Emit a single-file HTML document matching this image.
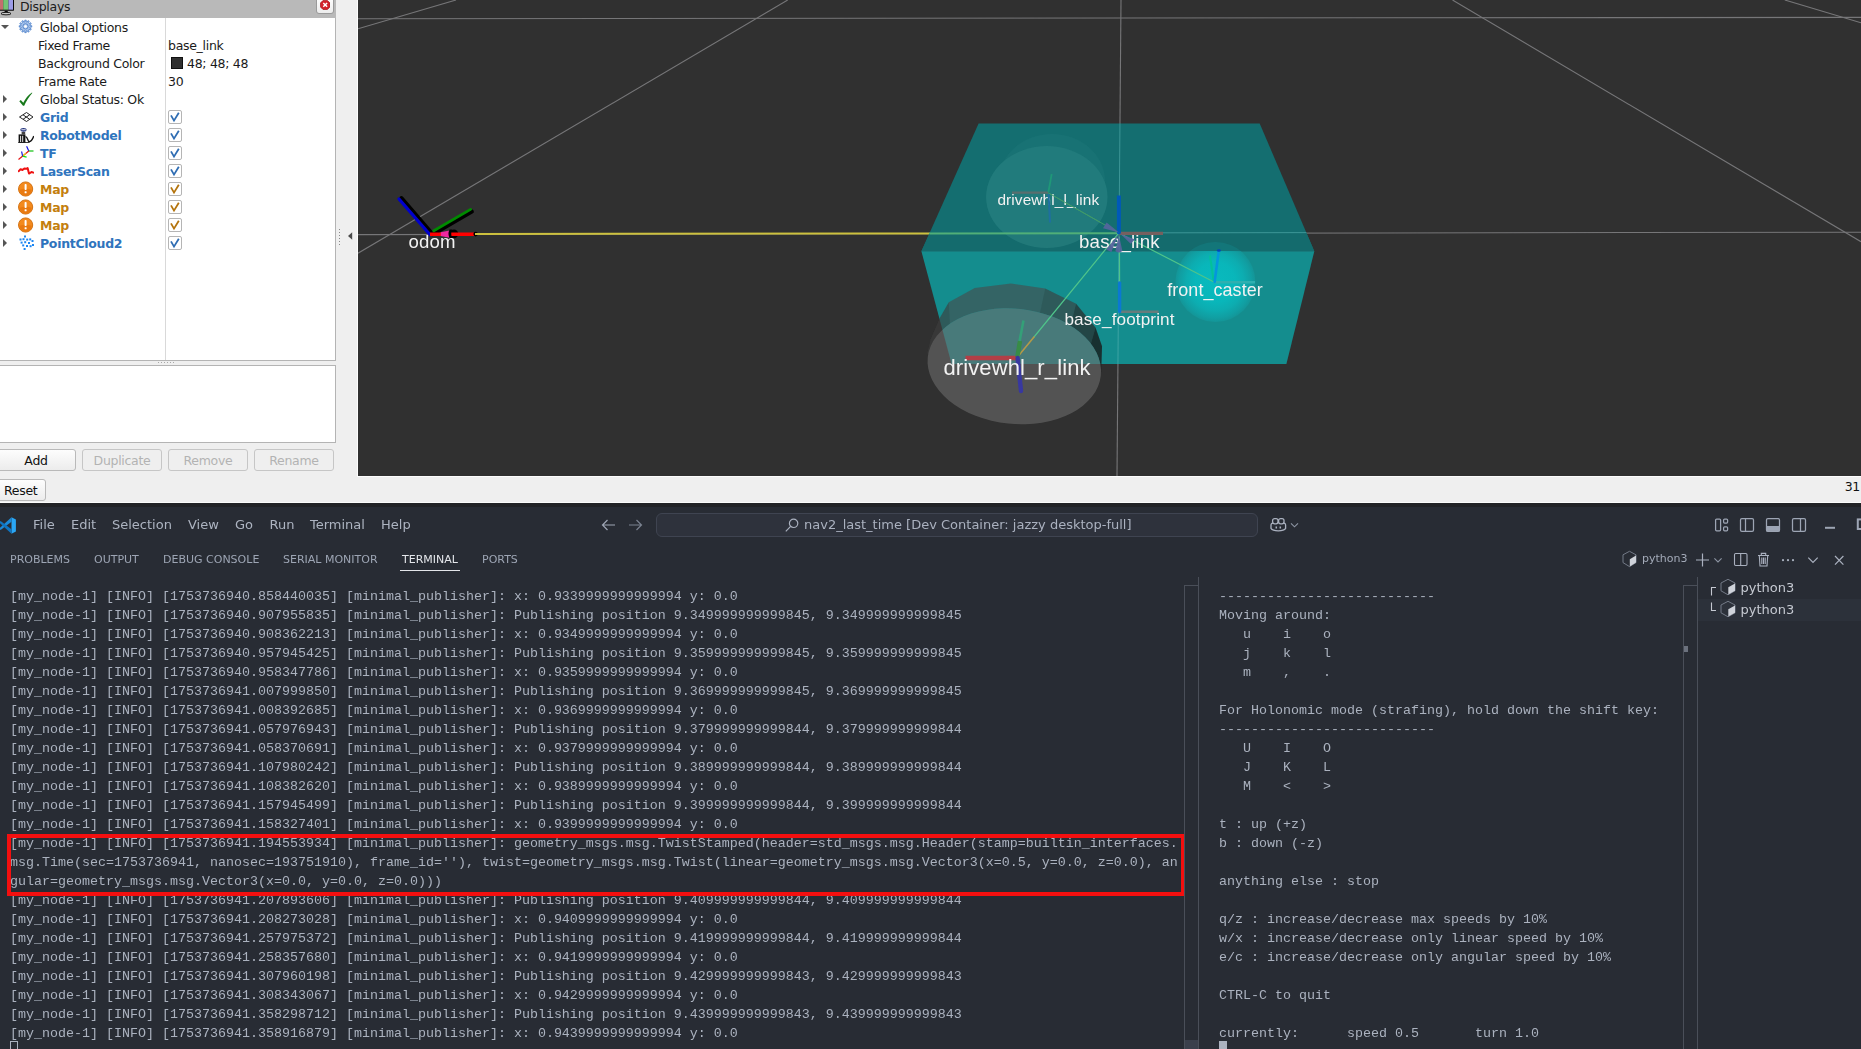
<!DOCTYPE html>
<html lang="en">
<head>
<meta charset="utf-8">
<title>RViz and VS Code terminal</title>
<style>
*{box-sizing:border-box;margin:0;padding:0}
html,body{width:1861px;height:1049px;overflow:hidden;background:#efefef}
body{position:relative;font-family:"DejaVu Sans","Liberation Sans",sans-serif;font-size:12px;color:#1a1a1a}
#rviz{font-size:12.5px;letter-spacing:-.3px}
.abs{position:absolute}
/* ---------- RViz ---------- */
#rviz{position:absolute;left:0;top:0;width:1861px;height:502px;background:#efefef}
#dtitle{position:absolute;left:0;top:0;width:336px;height:18px;background:#b9b9b9}
#dtitle .t{position:absolute;left:20px;top:-2px;font-size:12.5px;line-height:18px;color:#1b1b1b}
#dlist{position:absolute;left:0;top:18px;width:336px;height:343px;background:#fff;border-right:1px solid #b4b4b4;border-bottom:1px solid #b4b4b4}
#dlist .col{position:absolute;left:165px;top:0;width:1px;height:342px;background:#d9d9d9}
.row{position:absolute;left:0;width:335px;height:18px;line-height:19.6px;white-space:nowrap}
.row .lbl{position:absolute;top:0}
.row .val{position:absolute;left:168px;top:0}
.b{font-weight:700}
.blue{color:#2f74bd}
.org{color:#c47f0e}
.tri{position:absolute;left:3px;top:5px;width:0;height:0;border-left:4px solid #555;border-top:4px solid transparent;border-bottom:4px solid transparent}
.trid{position:absolute;left:1px;top:7px;width:0;height:0;border-top:4px solid #555;border-left:4px solid transparent;border-right:4px solid transparent}
.cb{position:absolute;left:168px;top:2px;width:14px;height:14px;border:1px solid #b5b5b5;border-radius:2px;background:#fff}
.cb svg{position:absolute;left:0;top:0}
#dbox2{position:absolute;left:0;top:365px;width:336px;height:78px;background:#fff;border:1px solid #b4b4b4;border-left:none}
.btn{position:absolute;height:22px;border:1px solid #b9b9b9;border-radius:3px;background:linear-gradient(#fdfdfd,#ececec);text-align:center;line-height:21px;font-size:12.5px;color:#111}
.btn.dis{color:#b3b3b3;background:#efefef;border-color:#c6c6c6}
#view3d{will-change:transform;position:absolute;left:358px;top:0;width:1503px;height:476px;background:#303030;overflow:hidden}
/* ---------- VS Code ---------- */
#sep1{position:absolute;left:0;top:502px;width:1861px;height:1px;background:#fbfbfb}
#sep2{position:absolute;left:0;top:503px;width:1861px;height:4px;background:#222326}
#vsc{will-change:transform;position:absolute;left:0;top:507px;width:1861px;height:542px;background:#282c34;color:#9da5b4;font-size:13px;overflow:hidden}
.menu{position:absolute;top:9px;line-height:17px;font-size:13px;color:#adb4c1;white-space:nowrap}
.tab{position:absolute;top:46px;line-height:14px;font-size:11px;color:#9da5b4;white-space:nowrap}
.term{position:absolute;font-family:"Liberation Mono","DejaVu Sans Mono",monospace;font-size:13.333px;line-height:19px;color:#abb2bf;white-space:pre}
</style>
</head>
<body>
<div id="rviz">
 <div id="dtitle">
  <svg class="abs" style="left:0;top:0" width="16" height="16" viewBox="0 0 16 16">
   <rect x="-3" y="-3" width="17" height="13.7" rx=".6" fill="#0a0a0a"/>
   <rect x="-2" y="-2" width="5.2" height="11.7" fill="#c46e6e"/><rect x="3.2" y="-2" width="5.3" height="11.7" fill="#74c474"/><rect x="8.5" y="-2" width="4.5" height="11.7" fill="#9c9ce8"/>
   <path d="M4.9 10.7 h2.6 l.6 1.7 h-3.8z" fill="#0a0a0a"/><ellipse cx="6" cy="13.6" rx="5" ry="1.25" fill="#c8c8c8" stroke="#0a0a0a" stroke-width=".9"/>
  </svg>
  <div class="t">Displays</div>
  <div class="abs" style="left:316px;top:-4px;width:18px;height:18px;border:1px solid #9a9a9a;border-radius:3px;background:linear-gradient(#fff,#ececec)"></div>
  <svg class="abs" style="left:320px;top:0px" width="10.4" height="10.4" viewBox="0 0 12 12">
   <polygon points="3.5,0.5 8.5,0.5 11.5,3.5 11.5,8 8.5,11 3.5,11 .5,8 .5,3.5" fill="#d3222a" stroke="#a40d14" stroke-width=".8"/>
   <path d="M3.8 3.4 L8.2 7.8 M8.2 3.4 L3.8 7.8" stroke="#fff" stroke-width="1.7"/>
  </svg>
 </div>
 <div id="dlist">
  <div class="col"></div>
  <!-- row 0 -->
  <div class="row" style="top:0"><i class="trid"></i>
   <svg class="abs" style="left:18px;top:1px" width="16" height="16" viewBox="0 0 16 16"><path d="M6.83 2.85 L6.78 1.14 L8.22 1.14 L8.17 2.85 L9.19 3.12 L10.00 1.62 L11.26 2.34 L10.36 3.80 L11.10 4.54 L12.56 3.64 L13.28 4.90 L11.78 5.71 L12.05 6.73 L13.76 6.68 L13.76 8.12 L12.05 8.07 L11.78 9.09 L13.28 9.90 L12.56 11.16 L11.10 10.26 L10.36 11.00 L11.26 12.46 L10.00 13.18 L9.19 11.68 L8.17 11.95 L8.22 13.66 L6.78 13.66 L6.83 11.95 L5.81 11.68 L5.00 13.18 L3.74 12.46 L4.64 11.00 L3.90 10.26 L2.44 11.16 L1.72 9.90 L3.22 9.09 L2.95 8.07 L1.24 8.12 L1.24 6.68 L2.95 6.73 L3.22 5.71 L1.72 4.90 L2.44 3.64 L3.90 4.54 L4.64 3.80 L3.74 2.34 L5.00 1.62 L5.81 3.12Z" fill="#a9c4ea" stroke="#3a72c4" stroke-width=".7" stroke-linejoin="round"/><circle cx="7.5" cy="7.4" r="2.6" fill="#c4d7f1" stroke="#3a72c4" stroke-width=".8"/><circle cx="7.5" cy="7.4" r="1.2" fill="#fff"/></svg>
   <span class="lbl" style="left:40px">Global Options</span></div>
  <div class="row" style="top:18px"><span class="lbl" style="left:38px">Fixed Frame</span><span class="val">base_link</span></div>
  <div class="row" style="top:36px"><span class="lbl" style="left:38px">Background Color</span><i class="abs" style="left:171px;top:3px;width:12px;height:12px;background:#303030;border:1px solid #111"></i><span class="val" style="left:187px">48; 48; 48</span></div>
  <div class="row" style="top:54px"><span class="lbl" style="left:38px">Frame Rate</span><span class="val">30</span></div>
  <div class="row" style="top:72px"><i class="tri"></i>
   <svg class="abs" style="left:18px;top:1px" width="16" height="16" viewBox="0 0 16 16"><path d="M1.3 10.2 L2.8 9 L5.3 11.8 C7 8 10.5 3.6 14 1.4 L14.3 1.9 C11 5.5 8 10.5 6.2 14.8 L5 14.8 Z" fill="#17791b"/></svg>
   <span class="lbl" style="left:40px">Global Status: Ok</span></div>
  <div class="row" style="top:90px"><i class="tri"></i>
   <svg class="abs" style="left:18px;top:1px" width="16" height="16" viewBox="0 0 16 16"><g fill="none" stroke="#222" stroke-width="1"><path d="M1.5 8 L8.5 3.5 L15 8 L8.5 12.5 Z"/><path d="M5 5.8 L11.7 10.3 M11.7 5.8 L5 10.3"/></g></svg>
   <span class="lbl b blue" style="left:40px">Grid</span><span class="cb"><svg width="12" height="12" viewBox="0 0 12 12"><path d="M2 4.4 L5 9.6 L9.8 1.8" fill="none" stroke="#2f6db3" stroke-width="1.8"/></svg></span></div>
  <div class="row" style="top:108px"><i class="tri"></i>
   <svg class="abs" style="left:18px;top:1px" width="16" height="16" viewBox="0 0 16 16"><ellipse cx="5.5" cy="2.8" rx="3.1" ry="1.9" fill="#1f2f78"/><rect x="3.2" y="2.3" width="4.6" height="1" rx=".5" fill="#e8ecf8"/><path d="M3.6 5 h3.6 v2.4 h-3.6z" fill="#444"/><path d="M.6 7.4 h6.8 v8.2 h-6.8z" fill="#111"/><path d="M2.6 8.8v6.4M4.7 8.8v6.4" stroke="#fff" stroke-width=".9"/><path d="M7.4 9.6 C10 9.6 9.2 14.6 11.4 14.6 C13.8 14.6 14.4 11.8 15.8 9.2" stroke="#111" stroke-width="1.4" fill="none"/><path d="M.2 15.6h11.4" stroke="#111" stroke-width=".9"/></svg>
   <span class="lbl b blue" style="left:40px">RobotModel</span><span class="cb"><svg width="12" height="12" viewBox="0 0 12 12"><path d="M2 4.4 L5 9.6 L9.8 1.8" fill="none" stroke="#2f6db3" stroke-width="1.8"/></svg></span></div>
  <div class="row" style="top:126px"><i class="tri"></i>
   <svg class="abs" style="left:18px;top:1px" width="16" height="16" viewBox="0 0 16 16"><g fill="none" stroke-width="1.2"><path d="M8.6 1.2 L10.8 6" stroke="#1414e6"/><path d="M10.8 6 H15.5" stroke="#10c010"/><path d="M10.8 6 L.5 14.5" stroke="#e41313"/><path d="M3.6 6.5 L4.6 11.2" stroke="#1414e6"/><path d="M4.6 11.2 L8.6 12.2" stroke="#10e010"/><path d="M8 8.3 L5.2 10.6" stroke="#e8d80e"/></g></svg>
   <span class="lbl b blue" style="left:40px">TF</span><span class="cb"><svg width="12" height="12" viewBox="0 0 12 12"><path d="M2 4.4 L5 9.6 L9.8 1.8" fill="none" stroke="#2f6db3" stroke-width="1.8"/></svg></span></div>
  <div class="row" style="top:144px"><i class="tri"></i>
   <svg class="abs" style="left:18px;top:1px" width="16" height="16" viewBox="0 0 16 16"><path d="M.8 8.2 L2.6 6.2 L4.4 7 L6.3 5.6 L8.3 5.8 L9.6 5 L11 10.6 L13.5 9 L15.3 9.6" fill="none" stroke="#ee1111" stroke-width="2" stroke-linejoin="round" stroke-linecap="round"/></svg>
   <span class="lbl b blue" style="left:40px">LaserScan</span><span class="cb"><svg width="12" height="12" viewBox="0 0 12 12"><path d="M2 4.4 L5 9.6 L9.8 1.8" fill="none" stroke="#2f6db3" stroke-width="1.8"/></svg></span></div>
  <div class="row" style="top:162px"><i class="tri"></i>
   <svg class="abs" style="left:18px;top:1px" width="16" height="16" viewBox="0 0 16 16"><circle cx="7.6" cy="8" r="7.1" fill="#f38a1e" stroke="#cf6a08" stroke-width=".9"/><path d="M1.6 8.8 A6 6 0 0 0 13.6 8.8 Q7.6 6.6 1.6 8.8Z" fill="#e97a10"/><rect x="6.6" y="3" width="2" height="6" rx=".8" fill="#fff"/><rect x="6.6" y="10.2" width="2" height="2.1" rx=".6" fill="#fff"/></svg>
   <span class="lbl b org" style="left:40px">Map</span><span class="cb"><svg width="12" height="12" viewBox="0 0 12 12"><path d="M2 4.4 L5 9.6 L9.8 1.8" fill="none" stroke="#b4740d" stroke-width="1.8"/></svg></span></div>
  <div class="row" style="top:180px"><i class="tri"></i>
   <svg class="abs" style="left:18px;top:1px" width="16" height="16" viewBox="0 0 16 16"><circle cx="7.6" cy="8" r="7.1" fill="#f38a1e" stroke="#cf6a08" stroke-width=".9"/><path d="M1.6 8.8 A6 6 0 0 0 13.6 8.8 Q7.6 6.6 1.6 8.8Z" fill="#e97a10"/><rect x="6.6" y="3" width="2" height="6" rx=".8" fill="#fff"/><rect x="6.6" y="10.2" width="2" height="2.1" rx=".6" fill="#fff"/></svg>
   <span class="lbl b org" style="left:40px">Map</span><span class="cb"><svg width="12" height="12" viewBox="0 0 12 12"><path d="M2 4.4 L5 9.6 L9.8 1.8" fill="none" stroke="#b4740d" stroke-width="1.8"/></svg></span></div>
  <div class="row" style="top:198px"><i class="tri"></i>
   <svg class="abs" style="left:18px;top:1px" width="16" height="16" viewBox="0 0 16 16"><circle cx="7.6" cy="8" r="7.1" fill="#f38a1e" stroke="#cf6a08" stroke-width=".9"/><path d="M1.6 8.8 A6 6 0 0 0 13.6 8.8 Q7.6 6.6 1.6 8.8Z" fill="#e97a10"/><rect x="6.6" y="3" width="2" height="6" rx=".8" fill="#fff"/><rect x="6.6" y="10.2" width="2" height="2.1" rx=".6" fill="#fff"/></svg>
   <span class="lbl b org" style="left:40px">Map</span><span class="cb"><svg width="12" height="12" viewBox="0 0 12 12"><path d="M2 4.4 L5 9.6 L9.8 1.8" fill="none" stroke="#b4740d" stroke-width="1.8"/></svg></span></div>
  <div class="row" style="top:216px"><i class="tri"></i>
   <svg class="abs" style="left:18px;top:1px" width="16" height="16" viewBox="0 0 16 16"><g fill="#1c86f2"><rect x="6" y="0.5" width="2" height="2"/><rect x="1.5" y="3.5" width="2" height="2"/><rect x="4.5" y="3.2" width="2" height="2"/><rect x="8.2" y="3.6" width="2" height="2"/><rect x="11.2" y="3.4" width="2" height="2"/><rect x="13.5" y="5" width="2" height="2"/><rect x="2.6" y="6.6" width="2" height="2"/><rect x="6.2" y="6.2" width="2" height="2"/><rect x="10" y="7" width="2" height="2"/><rect x="4.2" y="9.4" width="2" height="2"/><rect x="8" y="10" width="2" height="2"/><rect x="11.6" y="10.2" width="2" height="2"/><rect x="14" y="9" width="2" height="2"/><rect x="5.6" y="13" width="2" height="2"/></g></svg>
   <span class="lbl b blue" style="left:40px">PointCloud2</span><span class="cb"><svg width="12" height="12" viewBox="0 0 12 12"><path d="M2 4.4 L5 9.6 L9.8 1.8" fill="none" stroke="#2f6db3" stroke-width="1.8"/></svg></span></div>
 </div>
 <div class="abs" style="left:158px;top:362px;width:17px;height:1px;background:repeating-linear-gradient(90deg,#a8a8a8 0 1px,transparent 1px 3px)"></div>
 <div id="dbox2"></div>
 <div class="btn" style="left:-4px;top:449px;width:80px">Add</div>
 <div class="btn dis" style="left:82px;top:449px;width:80px">Duplicate</div>
 <div class="btn dis" style="left:168px;top:449px;width:80px">Remove</div>
 <div class="btn dis" style="left:254px;top:449px;width:80px">Rename</div>
 <div class="btn" style="left:-4px;top:479px;width:50px;text-align:left;padding-left:7px">Reset</div>
 <svg class="abs" style="left:347px;top:229.5px" width="6" height="12" viewBox="0 0 6 12"><path d="M5.2 2.2 L1 6 L5.2 9.8Z" fill="#4a4a4a"/></svg>
 <div class="abs" style="left:339px;top:229px;width:1.4px;height:17px;background:repeating-linear-gradient(#8a8a8a 0 1.2px,transparent 1.2px 3px)"></div>
 <div class="abs" style="left:357px;top:0;width:1px;height:477px;background:#fdfdfd"></div>
 <div class="abs" style="left:357px;top:476px;width:1504px;height:1px;background:#fdfdfd"></div>
 <div class="abs" style="right:1px;top:479px;font-size:12.5px;line-height:16px;color:#111">31</div>
 <div id="view3d">
 <svg width="1503" height="476" viewBox="358 0 1503 476" style="position:absolute;left:0;top:0" font-family="'Liberation Sans',sans-serif">
  <defs>
   <radialGradient id="cast" cx="0.5" cy="0.5" r="0.5">
    <stop offset="0" stop-color="#08bcc0" stop-opacity=".96"/>
    <stop offset=".5" stop-color="#08b9bd" stop-opacity=".94"/>
    <stop offset=".72" stop-color="#0cb0b4" stop-opacity=".9"/>
    <stop offset=".9" stop-color="#10a3a7" stop-opacity=".8"/>
    <stop offset="1" stop-color="#13999c" stop-opacity=".68"/>
   </radialGradient>
   <clipPath id="boxclip"><polygon points="978.6,123.4 1259.7,123.4 1314.3,251.2 1286.4,364.1 951.6,364.1 921.4,251.3"/></clipPath>
   <mask id="notfront"><rect x="358" y="0" width="1503" height="476" fill="#fff"/><ellipse cx="1014.3" cy="366.3" rx="87" ry="57.6" transform="rotate(6 1014.3 366.3)" fill="#000"/></mask>
   <mask id="notfrontL"><rect x="358" y="0" width="1503" height="476" fill="#fff"/><ellipse cx="1046.8" cy="197" rx="60.7" ry="51" fill="#000"/></mask>
   <clipPath id="lowhalf"><rect x="1100" y="251" width="300" height="120"/></clipPath>
   <clipPath id="uphalf"><rect x="1100" y="200" width="300" height="51"/></clipPath>
  </defs>
  <!-- grid -->
  <g stroke="#767678" stroke-width="1.1" fill="none">
   <path d="M358 18.7 L1861 17.4"/>
   <path d="M358 234.6 L1861 232.2"/>
   <path d="M1121 0 L1117 476"/>
   <path d="M358 28.7 L456 0"/>
   <path d="M358 253.2 L787.7 0"/>
   <path d="M1452.5 0 L1861 241.7"/>
   <path d="M1784.8 0 L1861 22.8"/>
  </g>
  <!-- odom link line -->
  <path d="M476 234 L930 233.4" stroke="#ccc03e" stroke-width="2"/>
  <!-- box -->
  <polygon points="978.6,123.4 1259.7,123.4 1314.3,251.3 921.4,251.3" fill="#146e70"/>
  <polygon points="929.5,233.4 1306.7,233.4 1314.3,251.3 921.4,251.3" fill="#146b6d"/>
  <polygon points="921.4,251.3 1314.3,251.3 1286.4,364.1 951.6,364.1" fill="#148d8e"/>
  <!-- grid seen through box -->
  <g clip-path="url(#boxclip)" stroke="#5fb7b7" stroke-opacity=".55" stroke-width="1">
   <path d="M1121 0 L1117 476"/><path d="M1119 232.9 L1320 232.6"/>
  </g>
  <!-- left wheel -->
  <ellipse cx="1052" cy="181" rx="53" ry="47" fill="#64beb9" fill-opacity=".06" mask="url(#notfrontL)"/>
  <ellipse cx="1046.8" cy="197" rx="60.7" ry="51" fill="#64beb9" fill-opacity=".17" clip-path="url(#boxclip)"/>
  <!-- caster -->
  <circle cx="1215.4" cy="282" r="40" fill="url(#cast)" clip-path="url(#lowhalf)"/>
  <circle cx="1215.4" cy="282" r="40" fill="#10a0a4" fill-opacity=".22" clip-path="url(#uphalf)"/>
  <!-- right wheel -->
  <g mask="url(#notfront)">
   <polygon points="927.3,353.3 930.7,339.2 940.2,317.2 948.8,302.2 974.7,288.1 1010.9,283.4 1045.2,288.6 1076.1,303.8 1095.5,327.4 1102,346.3 1101.2,372 1014,392" fill="#494949" fill-opacity=".6"/>
   <polygon points="1045.2,288.6 1076.1,303.8 1068,336 1038,322" fill="#000" fill-opacity=".1"/>
   <polygon points="1076.1,303.8 1095.5,327.4 1088,354 1068,336" fill="#000" fill-opacity=".3"/>
   <polygon points="1095.5,327.4 1102,346.3 1101.2,372 1094,374 1088,354" fill="#000" fill-opacity=".52"/>
   <polygon points="948.8,302.2 940.2,317.2 930.7,339.2 927.3,353.3 940,350 950,325" fill="#000" fill-opacity=".1"/>
  </g>
  <ellipse cx="1014.3" cy="366.3" rx="87" ry="57.6" transform="rotate(6 1014.3 366.3)" fill="#6d6d6d" fill-opacity=".587"/>
  <!-- tf connection lines -->
  <g fill="none" stroke-linecap="round">
   <path d="M930 233.5 L1118 233.2" stroke="#50af78" stroke-width="2"/>
   <path d="M1048.5 193 L1118.9 232.9" stroke="#3f9a6a" stroke-width="1"/>
   <path d="M1118.9 233 L1214 282" stroke="#4fc48a" stroke-width="1.2"/>
   <path d="M1119.4 237 L1119.6 283" stroke="#4fc48a" stroke-width="1.2"/>
   <path d="M1118.9 233 L1034 337" stroke="#4fc48a" stroke-width="1.2"/>
   <path d="M1034 337 L1017.5 357" stroke="#b49a48" stroke-width="1.6"/>
  </g>
  <!-- base_link axes -->
  <path d="M1119 233.4 H1163" stroke="#76605f" stroke-width="3.2"/>
  <path d="M1118.9 195.5 V232.5" stroke="#0059b8" stroke-width="4"/><circle cx="1118.9" cy="232.4" r="2" fill="#0059b8"/>
  <!-- caster axes -->
  <path d="M1214 282.3 H1255" stroke="#2fb0b0" stroke-width="2.4"/>
  <path d="M1213.6 281 L1210 255.5" stroke="#04c09a" stroke-width="2"/>
  <path d="M1214.6 282 L1218.8 251" stroke="#0496dc" stroke-width="2.6" stroke-linecap="round"/>
  <ellipse cx="1218.9" cy="250.5" rx="2" ry="1.2" fill="#0446b4"/>
  <!-- base_footprint axes -->
  <path d="M1120 311.8 H1158.6" stroke="#667c7c" stroke-width="2.6"/>
  <path d="M1119.6 283 V311.5" stroke="#0b78d2" stroke-width="3.4" stroke-linecap="round"/>
  <!-- drivewhl_r axes -->
  <path d="M965.5 358 H1017" stroke="#b23e46" stroke-width="4.4"/>
  <path d="M1019.4 342 L1023.5 320.5" stroke="#34a078" stroke-width="2.6"/>
  <path d="M1017.3 357 L1020 341" stroke="#388c46" stroke-width="4.4"/>
  <path d="M1017.6 358 L1021 391" stroke="#3838a0" stroke-width="4.4" stroke-linecap="round"/>
  <!-- odom axes -->
  <path d="M401.4 198.2 L432.4 234" stroke="#000" stroke-width="4.2" stroke-linecap="round"/>
  <path d="M399 199 L430 234.8" stroke="#0000cd" stroke-width="3.2" stroke-linecap="round"/>
  <path d="M435 233 L472 211.6" stroke="#000" stroke-width="3.8" stroke-linecap="round"/>
  <path d="M433.8 230.8 L470.6 209.4" stroke="#008a00" stroke-width="2.8" stroke-linecap="round"/>
  <ellipse cx="454" cy="233.8" rx="4.3" ry="4.4" fill="#000"/>
  <path d="M430 234.2 H474.4" stroke="#f00" stroke-width="3.4"/>
  <ellipse cx="475.6" cy="234.1" rx="2.2" ry="2.3" fill="#000"/>
  <path d="M475 234 H482" stroke="#ccc03e" stroke-width="2"/>
  <polygon points="440.8,232.3 449.6,230.6 449.6,237.8 440.8,236" fill="#f028a0"/>
  <path d="M449.6 229.6 Q447.4 233.8 449.6 238.2 L452.2 238.2 Q450.3 233.8 452.2 229.6Z" fill="#000"/>
  <!-- labels -->
  <g fill="#f2f2f2" lengthAdjust="spacing">
   <text x="408.5" y="248.3" font-size="18.6" textLength="46.6" lengthAdjust="spacing">odom</text>
   <text x="1079" y="247.6" font-size="18.7" textLength="80.4" lengthAdjust="spacing">base_link</text>
   <text x="997.4" y="205.2" font-size="15.4" textLength="101.4" lengthAdjust="spacing">drivewhl_l_link</text>
   <text x="1167.2" y="295.6" font-size="17.9" textLength="95.2" lengthAdjust="spacing">front_caster</text>
   <text x="1064.4" y="324.7" font-size="17.15" textLength="109.8" lengthAdjust="spacing">base_footprint</text>
   <text x="943.4" y="374.7" font-size="22" textLength="146.8" lengthAdjust="spacing">drivewhl_r_link</text>
  </g>
  <!-- drivewhl_l axes (above label) -->
  <path d="M1048.5 193 L1100 222.2" stroke="#3f9a6a" stroke-width="1" fill="none"/>
  <path d="M1012 192.6 H1048" stroke="#5a6e6e" stroke-width="2.4"/>
  <path d="M1048.4 192 L1051.7 174" stroke="#1f9878" stroke-width="1.8"/>
  <path d="M1048.6 194 L1050 222.5" stroke="#1f6fa0" stroke-width="2"/>
  <!-- base_link arrows (cones) drawn above labels -->
  <g fill="#54659c" fill-opacity=".94">
   <polygon points="1119,232.6 1106.6,222.4 1103,228.2"/>
   <polygon points="1118.4,234.6 1106,249.6 1111.4,252"/>
   <path d="M1118.9 235 L1115.4 251 Q1118.9 254 1122.4 251Z"/>
   <polygon points="1120.6,234 1130.6,243.8 1135,239.6"/>
  </g>
 </svg>
 </div>
</div>
<div id="sep1"></div><div id="sep2"></div>
<div id="vsc">
 <!-- logo -->
 <svg class="abs" style="left:-1px;top:10px" width="18" height="17" viewBox="0 0 18 17">
  <path d="M12.6 0.4 L16.8 2.3 V14.7 L12.6 16.6 L2 7.2 L0 8.6 L-1 7.8 L12.6 0.4Z" fill="#1f9cf0" opacity="0"/>
  <path d="M12.5 .3 L16.9 2.4 V14.6 L12.5 16.7 L12.5 .3Z" fill="#2aa6f4"/>
  <path d="M12.5 .3 L0 11.6 L1.6 13 L12.5 4.8Z" fill="#1b8ad8"/>
  <path d="M12.5 16.7 L0 5.4 L1.6 4 L12.5 12.2Z" fill="#0f75c2"/>
 </svg>
 <span class="menu" style="left:33px">File</span>
 <span class="menu" style="left:71px">Edit</span>
 <span class="menu" style="left:112px">Selection</span>
 <span class="menu" style="left:188px">View</span>
 <span class="menu" style="left:235px">Go</span>
 <span class="menu" style="left:269.5px">Run</span>
 <span class="menu" style="left:310px">Terminal</span>
 <span class="menu" style="left:381px">Help</span>
 <!-- nav arrows -->
 <svg class="abs" style="left:600px;top:10px" width="44" height="16" viewBox="0 0 44 16" fill="none" stroke="#9da5b4" stroke-width="1.2">
  <path d="M2.5 8 H15 M7.5 3 L2.5 8 L7.5 13"/>
  <path d="M29 8 H41.5 M36.5 3 L41.5 8 L36.5 13" stroke="#7a8290"/>
 </svg>
 <!-- command center -->
 <div class="abs" style="left:656px;top:6px;width:602px;height:24px;border:1px solid #3f4451;border-radius:6px;background:#2e323c"></div>
 <svg class="abs" style="left:784px;top:10px" width="16" height="16" viewBox="0 0 16 16" fill="none" stroke="#aab1bf" stroke-width="1.2"><circle cx="9.6" cy="6.3" r="4.2"/><path d="M6.6 9.4 L1.8 14.3"/></svg>
 <span class="menu" style="left:804px;color:#aab1bf">nav2_last_time [Dev Container: jazzy desktop-full]</span>
 <!-- copilot -->
 <svg class="abs" style="left:1270px;top:10px" width="30" height="16" viewBox="0 0 30 16" fill="none" stroke="#aab1bf" stroke-width="1.3">
  <rect x="2.6" y="1.6" width="5.4" height="5.2" rx="2"/><rect x="8.6" y="1.6" width="5.4" height="5.2" rx="2"/>
  <path d="M1 8.2 C1 6.4 2 6 3 6.4 M15.6 8.2 C15.6 6.4 14.6 6 13.6 6.4 M1 8 V11.4 C3 14.6 13.6 14.6 15.6 11.4 V8"/>
  <path d="M6.3 9.6 V11.6 M10.3 9.6 V11.6" stroke-width="1.5"/>
  <path d="M21 6.4 L24.5 9.8 L28 6.4" stroke-width="1.1" stroke="#8d95a3"/>
 </svg>
 <!-- layout controls -->
 <svg class="abs" style="left:1712px;top:10px" width="149" height="16" viewBox="1712 517 149 16" fill="none" stroke="#9da5b4" stroke-width="1.25">
  <rect x="1715.6" y="519" width="5" height="11.8" rx="1"/><rect x="1723.6" y="519" width="4" height="4" rx="1"/><rect x="1723.6" y="526.8" width="4" height="4" rx="1"/>
  <rect x="1740.5" y="518.7" width="13" height="12.6" rx="1.4"/><path d="M1745.5 518.7 V531.3"/>
  <rect x="1766.5" y="518.7" width="13" height="12.6" rx="1.4"/><path d="M1767 526.6 h12 v4.2 h-12z" fill="#9da5b4"/>
  <rect x="1792.5" y="518.7" width="13" height="12.6" rx="1.4"/><path d="M1800.5 518.7 V531.3"/>
  <path d="M1825 527.8 H1835" stroke-width="2"/>
  <rect x="1857.8" y="519.4" width="10" height="9.6" stroke-width="2"/>
 </svg>
 <!-- panel tabs -->
 <span class="tab" style="left:10px">PROBLEMS</span>
 <span class="tab" style="left:94px">OUTPUT</span>
 <span class="tab" style="left:163px">DEBUG CONSOLE</span>
 <span class="tab" style="left:283px">SERIAL MONITOR</span>
 <span class="tab" style="left:402px;color:#e4e6ea">TERMINAL</span>
 <span class="tab" style="left:482px">PORTS</span>
 <div class="abs" style="left:400px;top:63px;width:60px;height:1px;background:#e4e6ea"></div>
 <!-- panel actions -->
 <svg class="abs" style="left:1618px;top:42px" width="243" height="20" viewBox="1618 549 243 20" fill="none" stroke="#aab1bf" stroke-width="1.1">
  <g stroke="#737a87" stroke-width="1"><path d="M1629.5 551.3 L1636 554.8 V562.6 L1629.5 566.6 L1623 562.6 V554.8Z"/></g>
  <path d="M1629.8 559.2 L1636 555.6 V562.6 L1629.8 566.4Z" fill="#cfd3da" stroke="none"/>
  <path d="M1696 560 H1709 M1702.5 553.5 V566.5" stroke-width="1.2"/>
  <path d="M1714.4 558.4 L1718 562 L1721.6 558.4" stroke="#8d95a3"/>
  <rect x="1734.5" y="553.5" width="12.5" height="12" rx="1.2"/><path d="M1740.7 553.5 V565.5"/>
  <path d="M1758 555.5 H1769 M1761.3 555.3 V553.4 H1765.7 V555.3 M1759.3 555.8 L1760 566 H1767 L1767.7 555.8 M1761.8 557.6 V564 M1763.5 557.6 V564 M1765.2 557.6 V564"/>
  <g fill="#aab1bf" stroke="none"><circle cx="1783" cy="560.2" r="1.1"/><circle cx="1788" cy="560.2" r="1.1"/><circle cx="1793" cy="560.2" r="1.1"/></g>
  <path d="M1808.3 557.6 L1813 562.4 L1817.7 557.6" stroke-width="1.2"/>
  <path d="M1835 556 L1843.4 564.6 M1843.4 556 L1835 564.6" stroke-width="1.2"/>
 </svg>
 <span class="tab" style="left:1642px;top:45px;color:#a3aab8">python3</span>
 <!-- left terminal -->
 <div class="term" style="left:10px;top:79.5px">[my_node-1] [INFO] [1753736940.858440035] [minimal_publisher]: x: 0.9339999999999994 y: 0.0
[my_node-1] [INFO] [1753736940.907955835] [minimal_publisher]: Publishing position 9.349999999999845, 9.349999999999845
[my_node-1] [INFO] [1753736940.908362213] [minimal_publisher]: x: 0.9349999999999994 y: 0.0
[my_node-1] [INFO] [1753736940.957945425] [minimal_publisher]: Publishing position 9.359999999999845, 9.359999999999845
[my_node-1] [INFO] [1753736940.958347786] [minimal_publisher]: x: 0.9359999999999994 y: 0.0
[my_node-1] [INFO] [1753736941.007999850] [minimal_publisher]: Publishing position 9.369999999999845, 9.369999999999845
[my_node-1] [INFO] [1753736941.008392685] [minimal_publisher]: x: 0.9369999999999994 y: 0.0
[my_node-1] [INFO] [1753736941.057976943] [minimal_publisher]: Publishing position 9.379999999999844, 9.379999999999844
[my_node-1] [INFO] [1753736941.058370691] [minimal_publisher]: x: 0.9379999999999994 y: 0.0
[my_node-1] [INFO] [1753736941.107980242] [minimal_publisher]: Publishing position 9.389999999999844, 9.389999999999844
[my_node-1] [INFO] [1753736941.108382620] [minimal_publisher]: x: 0.9389999999999994 y: 0.0
[my_node-1] [INFO] [1753736941.157945499] [minimal_publisher]: Publishing position 9.399999999999844, 9.399999999999844
[my_node-1] [INFO] [1753736941.158327401] [minimal_publisher]: x: 0.9399999999999994 y: 0.0
[my_node-1] [INFO] [1753736941.194553934] [minimal_publisher]: geometry_msgs.msg.TwistStamped(header=std_msgs.msg.Header(stamp=builtin_interfaces.
msg.Time(sec=1753736941, nanosec=193751910), frame_id=''), twist=geometry_msgs.msg.Twist(linear=geometry_msgs.msg.Vector3(x=0.5, y=0.0, z=0.0), an
gular=geometry_msgs.msg.Vector3(x=0.0, y=0.0, z=0.0)))
[my_node-1] [INFO] [1753736941.207893606] [minimal_publisher]: Publishing position 9.409999999999844, 9.409999999999844
[my_node-1] [INFO] [1753736941.208273028] [minimal_publisher]: x: 0.9409999999999994 y: 0.0
[my_node-1] [INFO] [1753736941.257975372] [minimal_publisher]: Publishing position 9.419999999999844, 9.419999999999844
[my_node-1] [INFO] [1753736941.258357680] [minimal_publisher]: x: 0.9419999999999994 y: 0.0
[my_node-1] [INFO] [1753736941.307960198] [minimal_publisher]: Publishing position 9.429999999999843, 9.429999999999843
[my_node-1] [INFO] [1753736941.308343067] [minimal_publisher]: x: 0.9429999999999994 y: 0.0
[my_node-1] [INFO] [1753736941.358298712] [minimal_publisher]: Publishing position 9.439999999999843, 9.439999999999843
[my_node-1] [INFO] [1753736941.358916879] [minimal_publisher]: x: 0.9439999999999994 y: 0.0</div>
 <div class="abs" style="left:10px;top:534px;width:7.5px;height:10px;border:1px solid #abb2bf"></div>
 <div class="abs" style="left:7px;top:326.5px;width:1178px;height:62px;border:4px solid #f40f0f"></div>
 <div class="abs" style="left:1184px;top:78px;width:15px;height:470px;border-left:1px solid #4a4f59;border-top:1px solid #4a4f59"></div>
 <div class="abs" style="left:1185px;top:533px;width:13px;height:10px;background:#3b404c"></div>
 <div class="abs" style="left:1198px;top:70px;width:1px;height:480px;background:#4a4f59"></div>
 <!-- right terminal -->
 <div class="term" style="left:1219px;top:79.5px">---------------------------
Moving around:
   u    i    o
   j    k    l
   m    ,    .

For Holonomic mode (strafing), hold down the shift key:
---------------------------
   U    I    O
   J    K    L
   M    &lt;    &gt;

t : up (+z)
b : down (-z)

anything else : stop

q/z : increase/decrease max speeds by 10%
w/x : increase/decrease only linear speed by 10%
e/c : increase/decrease only angular speed by 10%

CTRL-C to quit

currently:      speed 0.5       turn 1.0 </div>
 <div class="abs" style="left:1219px;top:534px;width:8px;height:10px;background:#abb2bf"></div>
 <div class="abs" style="left:1683px;top:78px;width:15px;height:470px;border-left:1px solid #4a4f59;border-top:1px solid #4a4f59"></div>
 <div class="abs" style="left:1684px;top:139px;width:4px;height:6px;background:#6b717d"></div>
 <div class="abs" style="left:1697px;top:70px;width:1px;height:480px;background:#4a4f59"></div>
 <div class="abs" style="left:1698px;top:92px;width:163px;height:22px;background:#2c313a"></div>
 <svg class="abs" style="left:1706px;top:70px" width="34" height="22" viewBox="1706 577 34 22" fill="none" stroke="#c5c9d1" stroke-width="1.1"><path d="M1711.5 595.5 V587.5 H1716"/><g stroke="#737a87" stroke-width="1"><path d="M1728 579.3 L1735 583 V590.8 L1728 594.8 L1721 590.8 V583Z"/></g><path d="M1728.3 587.2 L1735 583.6 V590.8 L1728.3 594.6Z" fill="#cfd3da" stroke="none"/></svg>
 <span class="menu" style="left:1740.5px;top:72px;color:#c5c9d1">python3</span>
 <svg class="abs" style="left:1706px;top:92px" width="34" height="22" viewBox="1706 599 34 22" fill="none" stroke="#c5c9d1" stroke-width="1.1"><path d="M1711.5 602.5 V610.5 H1716"/><g stroke="#737a87" stroke-width="1"><path d="M1728 601.3 L1735 605 V612.8 L1728 616.8 L1721 612.8 V605Z"/></g><path d="M1728.3 609.2 L1735 605.6 V612.8 L1728.3 616.6Z" fill="#cfd3da" stroke="none"/></svg>
 <span class="menu" style="left:1740.5px;top:94px;color:#c5c9d1">python3</span>
</div>
</body>
</html>
